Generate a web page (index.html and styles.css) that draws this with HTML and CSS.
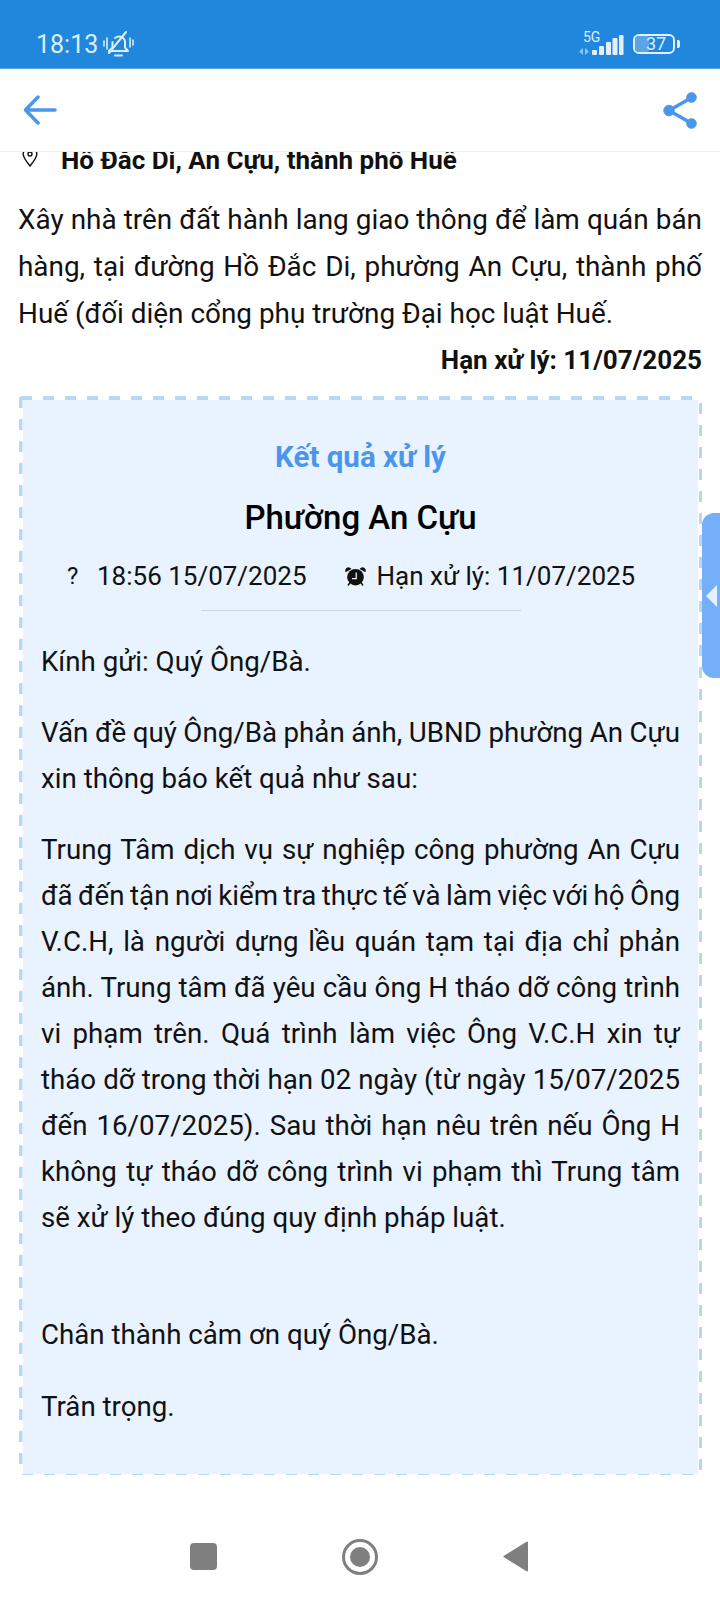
FILE: index.html
```html
<!DOCTYPE html>
<html lang="vi">

<head>
  <meta charset="UTF-8">
  <meta name="viewport" content="width=device-width, initial-scale=1.0">
  <title>Kết quả xử lý</title>
  <link rel="stylesheet" href="styles.css">
</head>

<body>
  <div class="status-bar">
    <div class="status-left">
      <span class="clock">18:13</span>
      <svg class="bell" width="31" height="26" viewBox="0 0 31 26" fill="none" stroke="#dcedfc" stroke-width="2" stroke-linecap="round" stroke-linejoin="round">
        <path d="M6 20h19l-3-3.500V11c0-3-2.500-5.500-6-5.500-1.500 0-3 .6-4 1.500"/>
        <path d="M9.500 11v5.500L6 20"/>
        <path d="M6 22 23 1"/>
        <path d="M12 24.500h7"/>
        <path d="M1 10v5M4 7v11M27 7v9M30 9v5" stroke-width="1.600"/>
      </svg>
    </div>
    <div class="status-right">
      <div class="network">
        <span class="network-label">5G</span>
        <svg class="signal" width="46" height="22" viewBox="0 0 46 22" fill="#e3f0fc">
          <path d="M0 18.500l4-3.500v7l-4-3.500zM6 15l4 3.500L6 22v-7z" opacity=".55"/>
          <rect x="13" y="17" width="5" height="5" rx="1"/>
          <rect x="20" y="13" width="5" height="9" rx="1"/>
          <rect x="27" y="9" width="5" height="13" rx="1"/>
          <rect x="33.500" y="5" width="5" height="17" rx="1"/>
          <rect x="40" y="2" width="4.500" height="20" rx="1"/>
        </svg>
      </div>
      <div class="battery">
        <div class="battery-body">
          <div class="battery-level" style="width: 37%"></div>
          <span class="battery-text">37</span>
        </div>
        <div class="battery-tip"></div>
      </div>
    </div>
  </div>

  <header class="app-bar">
    <svg width="34" height="30" viewBox="0 0 34 30" fill="none" stroke="#4a96ea" stroke-width="3.500" stroke-linecap="round" stroke-linejoin="round">
      <path d="M32 15H2.500M15 2 2.500 15 15 28"/>
    </svg>
    <svg width="34" height="37" viewBox="0 0 34 37" fill="#4a96ea" stroke="#4a96ea">
      <path d="M28 6 6 18.500 28 31" fill="none" stroke-width="3.500"/>
      <circle cx="28.500" cy="5.500" r="4.800"/>
      <circle cx="6" cy="18.500" r="5.200"/>
      <circle cx="28.500" cy="31.500" r="4.800"/>
    </svg>
  </header>

  <main class="content">
    <div class="address">
      <svg class="pin" width="16" height="20" viewBox="0 0 16 20" fill="none" stroke="#111" stroke-width="1.400">
        <path d="M8 19C4 14 1.200 10.500 1.200 7.200a6.800 6.800 0 0 1 13.600 0C14.800 10.500 12 14 8 19z"/>
        <circle cx="8" cy="7" r="2"/>
      </svg>
      <span>Hồ Đắc Di, An Cựu, thành phố Huế</span>
    </div>
    <p class="description">Xây nhà trên đất hành lang giao thông để làm quán bán hàng, tại đường Hồ Đắc Di, phường An Cựu, thành phố Huế (đối diện cổng phụ trường Đại học luật Huế.</p>
    <p class="deadline">Hạn xử lý: 11/07/2025</p>

    <section class="result">
      <h2 class="result-title">Kết quả xử lý</h2>
      <h3 class="result-org">Phường An Cựu</h3>
      <div class="result-meta">
        <span class="meta-item"><span class="meta-missing">?</span>18:56 15/07/2025</span>
        <span class="meta-item meta-due">
          <svg width="21" height="19" viewBox="0 0 21 19" fill="#111">
            <path d="M.6 5.200C-.6 2.500 1.500 0 4.200.4 5.200.6 6 1.200 6.400 2z"/>
            <path d="M20.400 5.200C21.600 2.500 19.500 0 16.800.4 15.800.6 15 1.200 14.600 2z"/>
            <circle cx="10.500" cy="10.200" r="8.300"/>
            <path d="M10.600 5.500h1.300v6.700H7v-1.300h3.600z" fill="#e8f3ff"/>
            <path d="M5 15.500 3 18.500M16 15.500l2 3" stroke="#111" stroke-width="1.400"/>
          </svg>
          Hạn xử lý: 11/07/2025
        </span>
      </div>
      <div class="result-line"></div>
      <div class="result-body">
        <p>Kính gửi: Quý Ông/Bà.</p>
        <p>
          <span class="line">Vấn đề quý Ông/Bà phản ánh, UBND phường An Cựu</span>
          <span class="line-end">xin thông báo kết quả như sau:</span>
        </p>
        <p>
          <span class="line">Trung Tâm dịch vụ sự nghiệp công phường An Cựu</span>
          <span class="line">đã đến tận nơi kiểm tra thực tế và làm việc với hộ Ông</span>
          <span class="line">V.C.H, là người dựng lều quán tạm tại địa chỉ phản</span>
          <span class="line">ánh. Trung tâm đã yêu cầu ông H tháo dỡ công trình</span>
          <span class="line">vi phạm trên. Quá trình làm việc Ông V.C.H xin tự</span>
          <span class="line">tháo dỡ trong thời hạn 02 ngày (từ ngày 15/07/2025</span>
          <span class="line">đến 16/07/2025). Sau thời hạn nêu trên nếu Ông H</span>
          <span class="line">không tự tháo dỡ công trình vi phạm thì Trung tâm</span>
          <span class="line-end">sẽ xử lý theo đúng quy định pháp luật.</span>
        </p>
        <p class="spacer"></p>
        <p class="closing">Chân thành cảm ơn quý Ông/Bà.</p>
        <p>Trân trọng.</p>
      </div>
    </section>

    <div class="side-tab"><div class="side-arrow"></div></div>
  </main>

  <nav class="nav-bar">
    <div class="nav-square"></div>
    <div class="nav-circle"><div class="nav-dot"></div></div>
    <svg width="25" height="31" viewBox="0 0 25 31" fill="#7f7f7f" stroke="#7f7f7f" stroke-width="2" stroke-linejoin="round">
      <path d="M24 1.500V29.500L1.500 15.500z"/>
    </svg>
  </nav>
</body>

</html>
```

FILE: styles.css
```css
* {
  box-sizing: border-box;
}

body {
  font-family: 'Roboto', sans-serif;
  background-color: #ffffff;
  color: #111111;
  margin: 0;
  padding: 0;
  width: 720px;
  height: 1600px;
  display: flex;
  flex-direction: column;
  overflow: hidden;
}

p {
  margin: 0;
}

/* status bar */
.status-bar {
  height: 69px;
  background-color: #2187dc;
  border-bottom: 1px solid #5aa5e6;
  padding: 20px 40px 0 36px;
  display: flex;
  align-items: center;
  justify-content: space-between;
  color: #dcedfc;
  flex-shrink: 0;
}

.status-left {
  display: flex;
  align-items: center;
  gap: 5px;
}

.clock {
  font-size: 25px;
}

.status-right {
  display: flex;
  align-items: center;
  gap: 8px;
}

.network {
  position: relative;
  width: 46px;
  height: 22px;
}

.network-label {
  position: absolute;
  left: 4px;
  top: -4px;
  font-size: 14px;
}

.signal {
  display: block;
}

.battery {
  display: flex;
  align-items: center;
  gap: 2px;
}

.battery-body {
  position: relative;
  width: 42px;
  height: 20px;
  border: 2px solid #e3f0fc;
  border-radius: 6px;
  overflow: hidden;
}

.battery-level {
  height: 100%;
  background-color: #5aa5e6;
  border-radius: 2px;
}

.battery-text {
  position: absolute;
  top: -2px;
  left: 11px;
  font-size: 18px;
  line-height: 20px;
}

.battery-tip {
  width: 3px;
  height: 8px;
  background-color: #e3f0fc;
  border-radius: 0 2px 2px 0;
}

/* app bar */
.app-bar {
  height: 83px;
  border-bottom: 1px solid #f0f0f0;
  padding: 0 23px 0 23px;
  display: flex;
  align-items: center;
  justify-content: space-between;
  flex-shrink: 0;
}

/* content */
.content {
  position: relative;
  flex: 1;
  padding: 0 18px;
  overflow: hidden;
}

.address {
  height: 23px;
  padding-left: 4px;
  display: flex;
  align-items: flex-end;
  gap: 23px;
  font-size: 26px;
  font-weight: 700;
  line-height: 30px;
  overflow: hidden;
}

.address .pin {
  margin-bottom: 8px;
}

.description {
  margin-top: 21px;
  font-size: 27.900px;
  line-height: 47px;
  text-align: justify;
}

.deadline {
  margin-top: 4px;
  font-size: 26px;
  font-weight: 700;
  line-height: 38px;
  text-align: right;
}

.result {
  margin: 17px 0 0 1px;
  height: 1082px;
  border: 4px solid transparent;
  padding: 40px 18px 0;
  background-image:
    repeating-linear-gradient(90deg, #b8d6f5 0 11px, transparent 11px 22px),
    repeating-linear-gradient(90deg, transparent 0 3px, #b8d6f5 3px 14px, transparent 14px 22px),
    repeating-linear-gradient(180deg, transparent 0 1px, #b8d6f5 1px 12px, transparent 12px 22px),
    repeating-linear-gradient(180deg, transparent 0 7px, #b8d6f5 7px 18px, transparent 18px 22px),
    linear-gradient(#e8f3ff, #e8f3ff);
  background-size: 100% 4px, 100% 4px, 3.500px 100%, 3.500px 100%, 100% 100%;
  background-position: 2px 0, 0 100%, 0 0, 100% 0, 0 0;
  background-repeat: no-repeat;
  background-origin: border-box;
  background-clip: border-box, border-box, border-box, border-box, padding-box;
}

.result-title {
  margin: -1px 0 0;
  color: #4a96ea;
  font-size: 29.500px;
  font-weight: 700;
  line-height: 36px;
  text-align: center;
}

.result-org {
  margin: 23px 0 0;
  color: #000000;
  font-size: 33px;
  font-weight: 500;
  line-height: 40px;
  text-align: center;
}

.result-meta {
  margin-top: 20px;
  padding-left: 26px;
  display: flex;
  font-size: 26px;
  line-height: 36px;
}

.meta-item {
  display: flex;
  align-items: center;
}

.meta-due {
  margin-left: 38px;
  gap: 11px;
}

.meta-missing {
  width: 30px;
  font-size: 24px;
}

.result-line {
  width: 320px;
  height: 1px;
  margin: 16px auto 0;
  background-color: #ccd4dd;
}

.result-body {
  margin-top: 28px;
  font-size: 27.700px;
  line-height: 46px;
}

.result-body p {
  margin-bottom: 25px;
}

.result-body .closing {
  margin-bottom: 26px;
}

.result-body .spacer {
  height: 46px;
  margin-bottom: 0;
}

/* the app wraps these lines itself, some of them squeeze the spaces */
.line {
  display: block;
  word-spacing: -3px;
  text-align: justify;
  text-align-last: justify;
}

.line-end {
  display: block;
}

.side-tab {
  position: absolute;
  right: 0;
  top: 361px;
  width: 18px;
  height: 165px;
  background-color: #74aff8;
  border-radius: 12px 0 0 12px;
  display: flex;
  align-items: center;
  justify-content: flex-end;
  padding-right: 3px;
}

.side-arrow {
  width: 0;
  height: 0;
  border-top: 11px solid transparent;
  border-bottom: 11px solid transparent;
  border-right: 11px solid #e6f1fe;
}

/* nav bar */
.nav-bar {
  height: 125px;
  padding: 38px 0 0 190px;
  display: flex;
  align-items: center;
  flex-shrink: 0;
  gap: 125px;
}

.nav-square {
  width: 27px;
  height: 27px;
  background-color: #7f7f7f;
  border-radius: 4px;
}

.nav-circle {
  width: 36px;
  height: 36px;
  border: 3px solid #7f7f7f;
  border-radius: 50%;
  display: flex;
  align-items: center;
  justify-content: center;
}

.nav-dot {
  width: 20px;
  height: 20px;
  background-color: #7f7f7f;
  border-radius: 50%;
}
```
